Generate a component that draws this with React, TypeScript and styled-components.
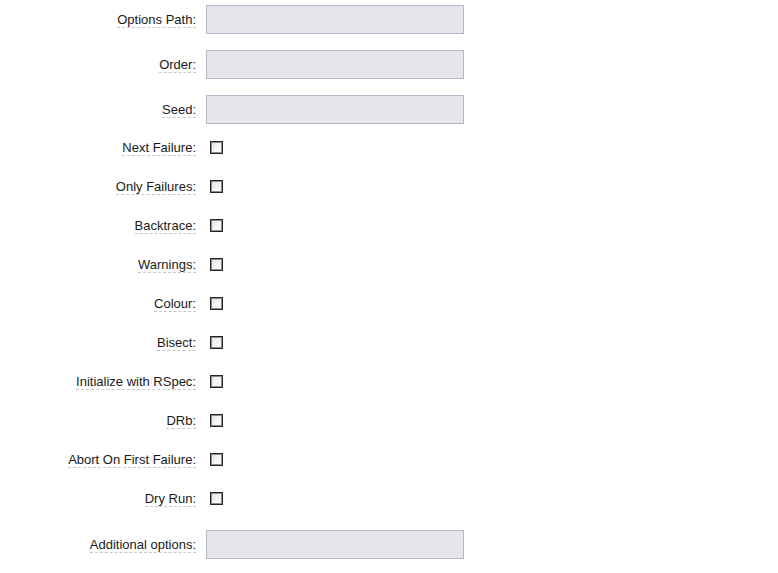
import React from 'react';
import styled, { createGlobalStyle } from 'styled-components';

const GlobalStyle = createGlobalStyle`
	html, body {
		margin: 0;
		padding: 0;
		background: #ffffff;
	}

	body {
		font-family: 'Liberation Sans', Arial, sans-serif;
		font-size: 13px;
		color: #1a1a1a;
	}
`;

const Form = styled.form`
	display: flex;
	flex-direction: column;
	gap: 16px;
	padding-top: 5px;
`;

const Row = styled.div<{ $kind: 'text' | 'check' }>`
	display: grid;
	grid-template-columns: 196px 258px;
	column-gap: 10px;
	align-items: ${(p) => (p.$kind === 'text' ? 'center' : 'start')};
	height: ${(p) => (p.$kind === 'text' ? '29px' : '23px')};
`;

const LabelCell = styled.div`
	display: flex;
	justify-content: flex-end;
`;

const Label = styled.label`
	line-height: 15px;
	border-bottom: 1px dashed #c9c9c9;
	white-space: nowrap;
	cursor: help;
`;

const TextInput = styled.input`
	box-sizing: border-box;
	width: 258px;
	height: 29px;
	margin: 0;
	padding: 2px 4px;
	border: 1px solid #b4b7c6;
	background: #e5e6e9;
	font-family: inherit;
	font-size: 13px;
	outline: none;
`;

const CheckBox = styled.input.attrs({ type: 'checkbox' })`
	appearance: none;
	box-sizing: border-box;
	width: 13px;
	height: 13px;
	margin: 1px 0 0 4px;
	border: 1px solid #262626;
	box-shadow: inset 0 0 0 1px #8c8c8c;
	background: linear-gradient(135deg, #e2e2e2 0%, #f7f7f7 60%, #ffffff 100%);
`;

type Field = { label: string; kind: 'text' | 'check' };

const fields: Field[] = [
	{ label: 'Options Path:', kind: 'text' },
	{ label: 'Order:', kind: 'text' },
	{ label: 'Seed:', kind: 'text' },
	{ label: 'Next Failure:', kind: 'check' },
	{ label: 'Only Failures:', kind: 'check' },
	{ label: 'Backtrace:', kind: 'check' },
	{ label: 'Warnings:', kind: 'check' },
	{ label: 'Colour:', kind: 'check' },
	{ label: 'Bisect:', kind: 'check' },
	{ label: 'Initialize with RSpec:', kind: 'check' },
	{ label: 'DRb:', kind: 'check' },
	{ label: 'Abort On First Failure:', kind: 'check' },
	{ label: 'Dry Run:', kind: 'check' },
	{ label: 'Additional options:', kind: 'text' },
];

export default function App() {
	return (
		<>
			<GlobalStyle />
			<Form>
				{fields.map((field, i) => (
					<Row key={field.label} $kind={field.kind}>
						<LabelCell>
							<Label htmlFor={`field-${i}`}>{field.label}</Label>
						</LabelCell>
						{field.kind === 'text' ? (
							<TextInput id={`field-${i}`} type="text" />
						) : (
							<div>
								<CheckBox id={`field-${i}`} />
							</div>
						)}
					</Row>
				))}
			</Form>
		</>
	);
}
